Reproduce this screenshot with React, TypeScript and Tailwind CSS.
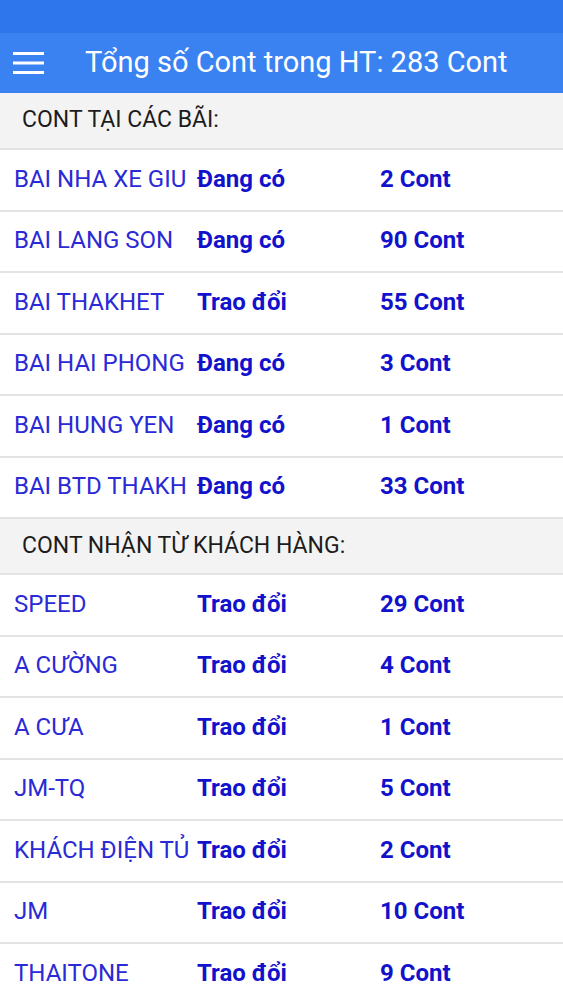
import React from "react";

type Row = { name: string; status: string; count: string };

const bai: Row[] = [
  { name: "BAI NHA XE GIU", status: "Đang có", count: "2 Cont" },
  { name: "BAI LANG SON", status: "Đang có", count: "90 Cont" },
  { name: "BAI THAKHET", status: "Trao đổi", count: "55 Cont" },
  { name: "BAI HAI PHONG", status: "Đang có", count: "3 Cont" },
  { name: "BAI HUNG YEN", status: "Đang có", count: "1 Cont" },
  { name: "BAI BTD THAKH", status: "Đang có", count: "33 Cont" },
];

const khach: Row[] = [
  { name: "SPEED", status: "Trao đổi", count: "29 Cont" },
  { name: "A CƯỜNG", status: "Trao đổi", count: "4 Cont" },
  { name: "A CƯA", status: "Trao đổi", count: "1 Cont" },
  { name: "JM-TQ", status: "Trao đổi", count: "5 Cont" },
  { name: "KHÁCH ĐIỆN TỦ", status: "Trao đổi", count: "2 Cont" },
  { name: "JM", status: "Trao đổi", count: "10 Cont" },
  { name: "THAITONE", status: "Trao đổi", count: "9 Cont" },
];

function ListRow({ r }: { r: Row }) {
  return (
    <div className="flex h-[61.5px] items-center border-b-2 border-[#e3e3e3] bg-white pb-[2px]">
      <div className="w-[197px] shrink-0 whitespace-nowrap pl-[14px] text-[24px] text-[#2a2ad6]">
        {r.name}
      </div>
      <div className="w-[183px] shrink-0 whitespace-nowrap text-[24px] font-bold text-[#1212cc]">
        {r.status}
      </div>
      <div className="whitespace-nowrap text-[24px] font-bold text-[#1212cc]">{r.count}</div>
    </div>
  );
}

function Header({ title, h }: { title: string; h: string }) {
  return (
    <div className={`flex ${h} items-center border-b-2 border-[#e3e3e3] bg-[#f3f3f3] pl-[22px] text-[23px] text-[#1c1c1c]`}>
      {title}
    </div>
  );
}

export default function App() {
  return (
    <div className="h-[1000px] w-[563px] overflow-hidden bg-white" style={{ fontFamily: "Roboto, 'Noto Sans', sans-serif" }}>
      <div className="h-[33px] bg-[#2e76ec]" />
      <div className="flex h-[60px] items-center bg-[#3a82f1]">
        <div className="flex w-[85px] shrink-0 pl-[13px]">
          <svg width="31" height="22" viewBox="0 0 31 22">
            <rect x="0" y="0" width="31" height="3" fill="white" />
            <rect x="0" y="9.5" width="31" height="3" fill="white" />
            <rect x="0" y="19" width="31" height="3" fill="white" />
          </svg>
        </div>
        <div className="whitespace-nowrap text-[29px] text-white">Tổng số Cont trong HT: 283 Cont</div>
      </div>
      <Header title="CONT TẠI CÁC BÃI:" h="h-[57px]" />
      {bai.map((r, i) => (
        <ListRow key={i} r={r} />
      ))}
      <Header title="CONT NHẬN TỪ KHÁCH HÀNG:" h="h-[56px]" />
      {khach.map((r, i) => (
        <ListRow key={i} r={r} />
      ))}
    </div>
  );
}
